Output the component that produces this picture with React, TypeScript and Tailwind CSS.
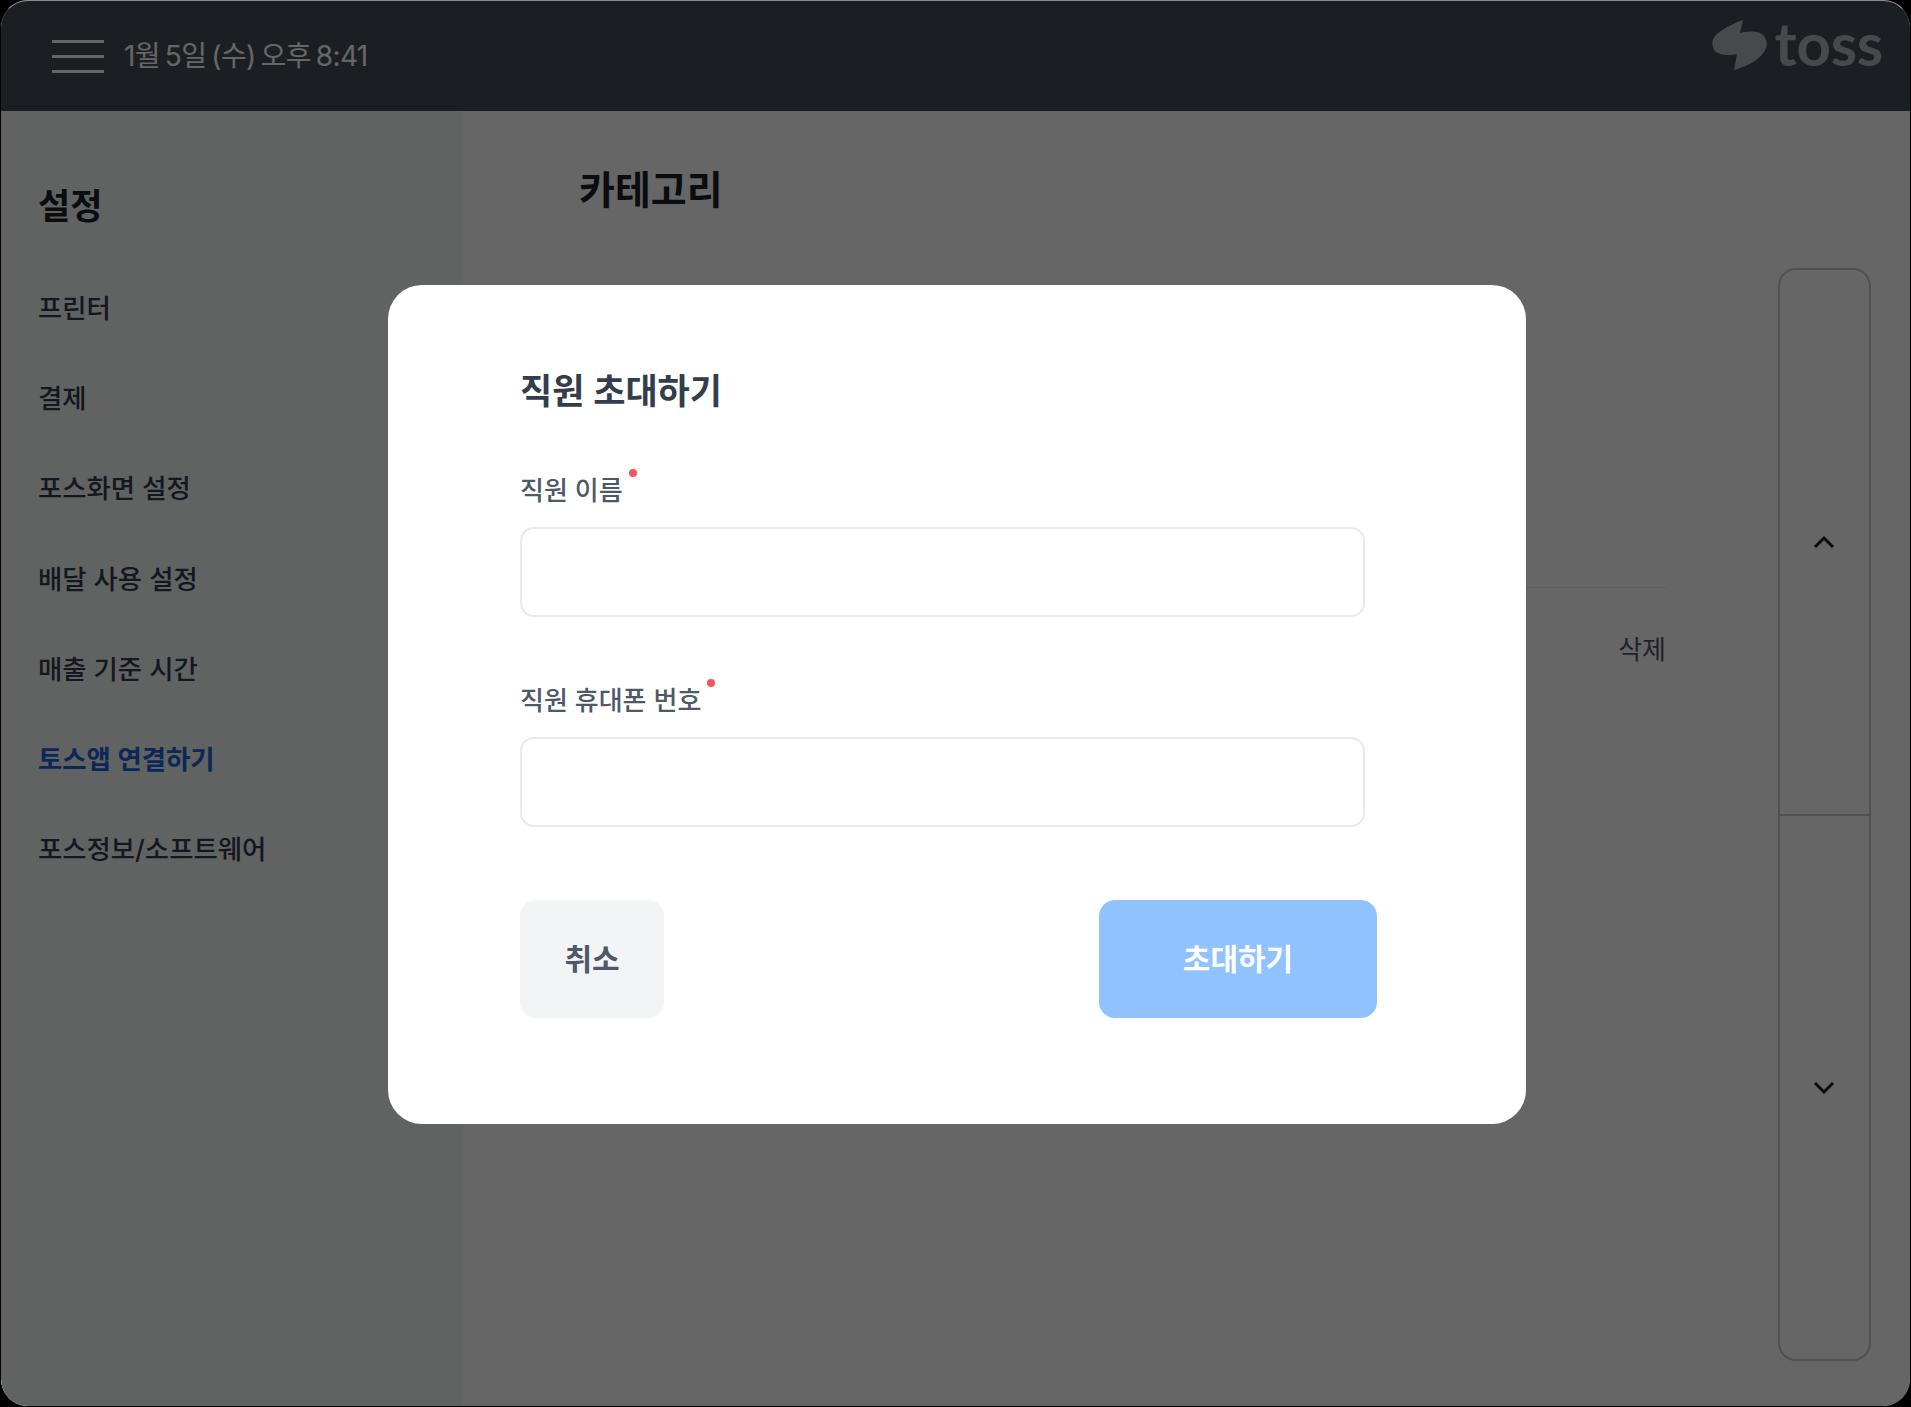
import React from 'react';

const FONT = "font-['Inter','Noto_Sans_CJK_KR',sans-serif]";

const menu = ['프린터', '결제', '포스화면 설정', '배달 사용 설정', '매출 기준 시간', '토스앱 연결하기', '포스정보/소프트웨어'];

const TossMark: React.FC = () => (
    <svg width="55" height="52" viewBox="0 0 55 52" className="shrink-0">
        <path
            d="M31 1 L28 14 C36 12 44 12 48 14 C54 17 56 24 54 29 C50 40 36 47 22 51 L25 35 C17 37 8 36 4 33 C-1 28 -1 20 5 15 C12 9 22 4 31 1 Z"
            fill="#b0b8c1"
        />
    </svg>
);

const Field: React.FC<{ label: string }> = ({ label }) => (
    <div>
        <div className="flex items-start h-[40px]">
            <span className="mt-[2px] text-[26px] leading-[40px] font-medium text-[#4e5968]">{label}</span>
            <span className="ml-[6px] w-[8px] h-[8px] rounded-full bg-[#f25561]" />
        </div>
        <input className="mt-[18px] block w-[845px] h-[90px] rounded-[14px] border-2 border-[#e8eaed] bg-white outline-none" />
    </div>
);

const App: React.FC = () => {
    return (
        <div className={`relative w-[1911px] h-[1407px] bg-black overflow-hidden ${FONT}`}>
            <div className="relative flex flex-col w-full h-full rounded-[28px] overflow-hidden bg-white border border-black border-t-[#8a8a8a]">
                {/* Top bar */}
                <header className="flex items-center justify-between h-[110px] shrink-0 bg-[#444b57] pl-[51px] pr-[27px]">
                    <div className="flex items-center gap-[20px]">
                        <div className="flex flex-col gap-[12px] w-[52px]">
                            <span className="block h-[3px] bg-white" />
                            <span className="block h-[3px] bg-white" />
                            <span className="block h-[3px] bg-white" />
                        </div>
                        <span className="text-[28px] leading-[40px] tracking-[-0.6px] [word-spacing:-2.4px] text-white">1월 5일 (수) 오후 8:41</span>
                    </div>
                    <div className="flex items-center gap-[8px] -mt-[22px]">
                        <TossMark />
                        <span className="-mt-[4px] text-[60px] leading-[54px] font-bold tracking-[-0.2px] text-[#b0b8c1] font-['Lato',sans-serif]">toss</span>
                    </div>
                </header>

                <div className="flex flex-1 min-h-0">
                    {/* Sidebar */}
                    <aside className="w-[462px] shrink-0 bg-[#f2f4f6] pl-[37px] pt-[71px]">
                        <h2 className="text-[35px] leading-[48px] font-bold text-[#191f28]">설정</h2>
                        <nav className="mt-[58px] flex flex-col gap-[50.2px]">
                            {menu.map((item) => (
                                <a
                                    key={item}
                                    className={`text-[26.4px] leading-[40px] ${item === '토스앱 연결하기' ? 'text-[#1b64da] font-semibold' : 'text-[#333d4b] font-medium'}`}
                                >
                                    {item}
                                </a>
                            ))}
                        </nav>
                    </aside>

                    {/* Main */}
                    <main className="flex flex-1 min-w-0 pl-[116px] pr-[39px] pt-[52px] pb-[45px]">
                        <div className="flex-1 min-w-0 mr-[112px]">
                            <h1 className="text-[39px] leading-[54px] font-bold text-[#191f28]">카테고리</h1>
                            <div className="mt-[370px] border-t border-[#e5e8eb]" />
                            <div className="mt-[43px] text-right text-[26px] leading-[38px] text-[#4e5968]">삭제</div>
                        </div>
                        <div className="flex flex-col w-[93px] mt-[105px] shrink-0 rounded-[18px] border-2 border-[#c4c8cc] overflow-hidden">
                            <button className="flex flex-1 items-center justify-center border-b-2 border-[#c4c8cc]">
                                <svg width="22" height="14" viewBox="0 0 22 14" fill="none" stroke="#191f28" strokeWidth="3" className="-ml-[2px]"><path d="M2 12 L11 3 L20 12" /></svg>
                            </button>
                            <button className="flex flex-1 items-center justify-center">
                                <svg width="22" height="14" viewBox="0 0 22 14" fill="none" stroke="#191f28" strokeWidth="3" className="-ml-[2px] mt-[2px]"><path d="M2 2 L11 11 L20 2" /></svg>
                            </button>
                        </div>
                    </main>
                </div>

                {/* Dim + dialog */}
                <div className="absolute inset-0 bg-black/60 flex items-start justify-center">
                    <div className="mt-[284px] ml-[3px] w-[1138px] h-[839px] bg-white rounded-[34px] pl-[132px] pt-[79px]">
                        <h3 className="text-[35px] leading-[54px] font-semibold text-[#333d4b]">직원 초대하기</h3>
                        <div className="mt-[51px] flex flex-col gap-[62px]">
                            <Field label="직원 이름" />
                            <Field label="직원 휴대폰 번호" />
                        </div>
                        <div className="mt-[73px] w-[857px] flex justify-between">
                            <button className="w-[144px] h-[118px] rounded-[16px] bg-[#f2f4f6] text-[30px] font-semibold text-[#4e5968]">취소</button>
                            <button className="w-[278px] h-[118px] rounded-[16px] bg-[#90c2ff] text-[30px] font-semibold text-white">초대하기</button>
                        </div>
                    </div>
                </div>
            </div>
        </div>
    );
};

export default App;
